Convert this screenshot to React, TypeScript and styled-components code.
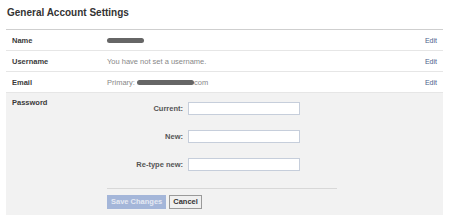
import React from 'react';
import styled, { createGlobalStyle } from 'styled-components';

const GlobalStyle = createGlobalStyle`
    body {
        margin: 0;
        background: #fff;
        font-family: "Liberation Sans", Arial, sans-serif;
    }
`;

const Page = styled.div`
    padding: 7px 7px 0 6px;
    width: 437px;
`;

const Title = styled.h2`
    color: #333;
    font-size: 10px;
    font-weight: bold;
    line-height: 12px;
    margin: 0 0 10px 1px;
`;

const Table = styled.section`
    border-top: 1px solid #cfcfcf;
`;

const Row = styled.div`
    align-items: center;
    border-bottom: 1px solid #e6e6e6;
    display: grid;
    grid-template-columns: 95px 1fr auto;
    height: 20px;
    padding: 0 6px;
`;

const Label = styled.div`
    color: #3a3a3a;
    font-size: 7.5px;
    font-weight: bold;
    line-height: 9px;
`;

const Value = styled.div`
    align-items: center;
    color: #888;
    display: flex;
    font-size: 7.5px;
    line-height: 9px;
`;

const Redacted = styled.span<{ $width: number }>`
    background: #666;
    border-radius: 3px;
    display: inline-block;
    height: 5px;
    width: ${p => p.$width}px;
`;

const EditLink = styled.a`
    color: #4a5f8c;
    font-size: 7px;
    line-height: 9px;
    text-decoration: none;
`;

const PasswordBlock = styled.div`
    background: #f2f2f2;
    display: grid;
    grid-template-columns: 95px 1fr;
    padding: 5px 6px 6px;
`;

const PasswordLabel = styled(Label)`
    align-self: start;
`;

const Form = styled.div`
    display: flex;
    flex-direction: column;
    padding-top: 4px;
`;

const Fields = styled.div`
    display: flex;
    flex-direction: column;
    gap: 15px;
`;

const Field = styled.label`
    align-items: center;
    display: flex;
    gap: 5px;
`;

const FieldName = styled.span`
    color: #555;
    font-size: 7.5px;
    font-weight: bold;
    text-align: right;
    width: 76px;
`;

const TextInput = styled.input`
    background: #fff;
    border: 1px solid #c6cedb;
    box-sizing: border-box;
    height: 13px;
    margin: 0;
    padding: 0;
    width: 112px;
`;

const Divider = styled.hr`
    border: none;
    border-top: 1px solid #d8d8d8;
    margin: 17px 0 6px;
    width: 230px;
`;

const Buttons = styled.div`
    display: flex;
    gap: 3px;
`;

const Button = styled.button<{ $primary?: boolean }>`
    background: ${p => (p.$primary ? '#a4b6d9' : '#f0f0f0')};
    border: 1px solid ${p => (p.$primary ? '#a4b6d9' : '#9a9a9a')};
    box-sizing: border-box;
    color: ${p => (p.$primary ? '#e4e9f3' : '#333')};
    font-family: "Liberation Sans", Arial, sans-serif;
    font-size: 7.5px;
    font-weight: bold;
    height: 14px;
    line-height: 12px;
    margin: 0;
    padding: 0 3px;
`;

const App = () => (
    <Page>
        <GlobalStyle />
        <Title>General Account Settings</Title>
        <Table>
            <Row>
                <Label>Name</Label>
                <Value><Redacted $width={37} /></Value>
                <EditLink href="#">Edit</EditLink>
            </Row>
            <Row>
                <Label>Username</Label>
                <Value>You have not set a username.</Value>
                <EditLink href="#">Edit</EditLink>
            </Row>
            <Row>
                <Label>Email</Label>
                <Value>
                    Primary:&nbsp;<Redacted $width={57} />com
                </Value>
                <EditLink href="#">Edit</EditLink>
            </Row>
            <PasswordBlock>
                <PasswordLabel>Password</PasswordLabel>
                <Form>
                    <Fields>
                        <Field>
                            <FieldName>Current:</FieldName>
                            <TextInput type="password" />
                        </Field>
                        <Field>
                            <FieldName>New:</FieldName>
                            <TextInput type="password" />
                        </Field>
                        <Field>
                            <FieldName>Re-type new:</FieldName>
                            <TextInput type="password" />
                        </Field>
                    </Fields>
                    <Divider />
                    <Buttons>
                        <Button $primary disabled>Save Changes</Button>
                        <Button>Cancel</Button>
                    </Buttons>
                </Form>
            </PasswordBlock>
        </Table>
    </Page>
);

export default App;
